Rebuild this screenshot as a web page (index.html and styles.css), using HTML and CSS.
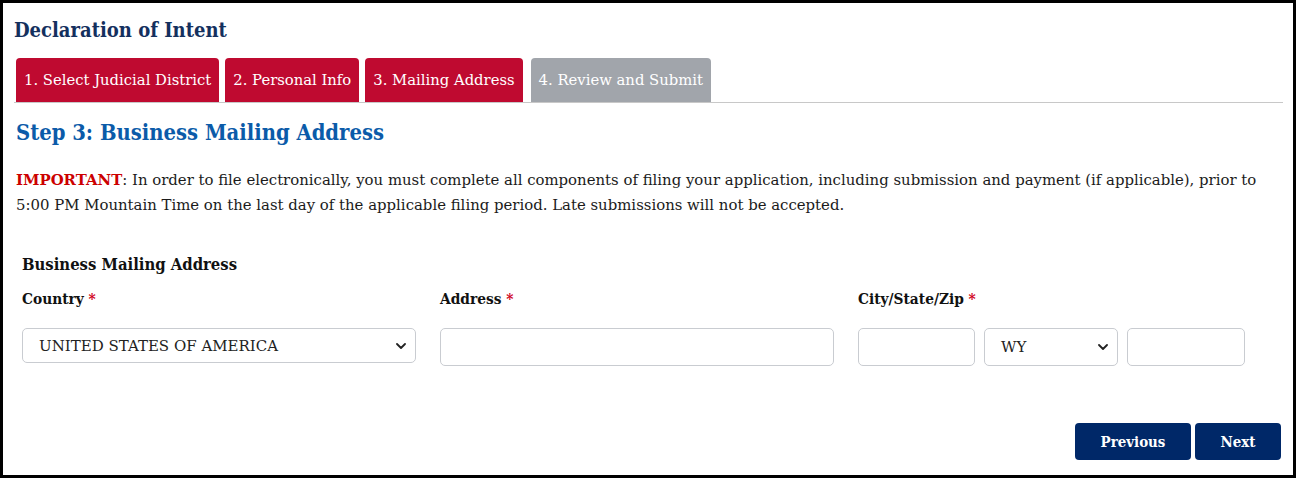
FILE: index.html
```html
<!DOCTYPE html>
<html lang="en">
<head>
<meta charset="utf-8">
<title>Declaration of Intent</title>
<link rel="stylesheet" href="styles.css">
</head>
<body>
<div class="page">
  <h1 class="title">Declaration of Intent</h1>
  <div class="tabs">
    <div class="tab tab-done">1. Select Judicial District</div>
    <div class="tab tab-done">2. Personal Info</div>
    <div class="tab tab-done">3. Mailing Address</div>
    <div class="tab tab-todo">4. Review and Submit</div>
  </div>
  <h2 class="step">Step 3: Business Mailing Address</h2>
  <p class="notice"><span class="important">IMPORTANT</span>: In order to file electronically, you must complete all components of filing your application, including submission and payment (if applicable), prior to 5:00 PM Mountain Time on the last day of the applicable filing period. Late submissions will not be accepted.</p>
  <div class="form">
    <h3 class="section">Business Mailing Address</h3>
    <div class="fields">
      <div class="field">
        <label class="label">Country <span class="req">*</span></label>
        <div class="select sel-country"><span>UNITED STATES OF AMERICA</span><svg class="chev" viewBox="0 0 10 6" width="10" height="6"><path d="M1 1l4 4 4-4" fill="none" stroke="#222" stroke-width="1.8" stroke-linecap="round" stroke-linejoin="round"/></svg></div>
      </div>
      <div class="field">
        <label class="label">Address <span class="req">*</span></label>
        <div class="input input-wide"></div>
      </div>
      <div class="field">
        <label class="label">City/State/Zip <span class="req">*</span></label>
        <div class="csz">
          <div class="input input-city"></div>
          <div class="select sel-state"><span>WY</span><svg class="chev" viewBox="0 0 10 6" width="10" height="6"><path d="M1 1l4 4 4-4" fill="none" stroke="#222" stroke-width="1.8" stroke-linecap="round" stroke-linejoin="round"/></svg></div>
          <div class="input input-zip"></div>
        </div>
      </div>
    </div>
  </div>
  <div class="actions">
    <button class="btn">Previous</button>
    <button class="btn btn-next">Next</button>
  </div>
</div>
</body>
</html>
```
FILE: styles.css
```css
* { box-sizing: border-box; }
html, body { margin: 0; padding: 0; background: #fff; }
body { font-family: "DejaVu Serif", "Liberation Serif", serif; color: #1b1b1b; }
.page {
  width: 1296px;
  height: 478px;
  border: 3px solid #000;
  padding: 0 10px 0 11px;
  display: flex;
  flex-direction: column;
}
.title {
  margin: 14px 0 0 0;
  font-size: 20px;
  font-stretch: condensed;
  line-height: 26px;
  color: #14305e;
  font-weight: bold;
}
.tabs {
  margin-top: 15px;
  display: flex;
  gap: 6px;
  padding-left: 2px;
  border-bottom: 1px solid #c8c8c8;
  width: 1269px;
}
.tab {
  height: 44px;
  padding: 0 8px 1px;
  display: flex;
  align-items: center;
  font-size: 14.8px;
  color: #fff;
  border-radius: 4px 4px 0 0;
  white-space: nowrap;
}
.tab-done { background: #bf0a30; }
.tab-todo { background: #a1a5ab; margin-left: 2px; }
.step {
  margin: 16px 0 0 2px;
  font-size: 21.8px;
  font-stretch: condensed;
  line-height: 27px;
  color: #0b5ba9;
  font-weight: bold;
}
.notice {
  margin: 22px 0 0 2px;
  font-size: 14.9px;
  line-height: 25px;
  width: 1260px;
}
.important { color: #c00; font-weight: bold; }
.form { margin: 37px 0 0 8px; }
.section {
  margin: 0;
  font-size: 16.5px;
  font-stretch: condensed;
  line-height: 20px;
  font-weight: bold;
  color: #111;
}
.fields { display: flex; gap: 24px; margin-top: 14px; }
.field { display: flex; flex-direction: column; width: 394px; }
.label { font-size: 15.3px; font-stretch: condensed; font-weight: bold; line-height: 20px; color: #111; }
.req { color: #d0021b; }
.select, .input {
  border: 1px solid #c9ccd1;
  border-radius: 5px;
  background: #fff;
  margin-top: 19px;
}
.select {
  display: flex;
  align-items: center;
  justify-content: space-between;
  padding: 0 9px 0 16px;
  font-size: 15px;
  color: #222;
}
.sel-country { width: 394px; height: 35px; }
.input-wide { width: 394px; height: 38px; }
.csz { display: flex; gap: 9px; }
.input-city { width: 117px; height: 38px; }
.sel-state { width: 134px; height: 38px; padding-left: 16px; }
.input-zip { width: 118px; height: 38px; }
.actions {
  margin-top: auto;
  margin-bottom: 15px;
  display: flex;
  justify-content: flex-end;
  gap: 4px;
  padding-right: 2px;
}
.btn {
  font-family: inherit;
  background: #002868;
  color: #fff;
  border: 0;
  border-radius: 4px;
  height: 37px;
  width: 116px;
  font-size: 14.9px;
  font-stretch: condensed;
  font-weight: bold;
}
.btn-next { width: 86px; }
```
